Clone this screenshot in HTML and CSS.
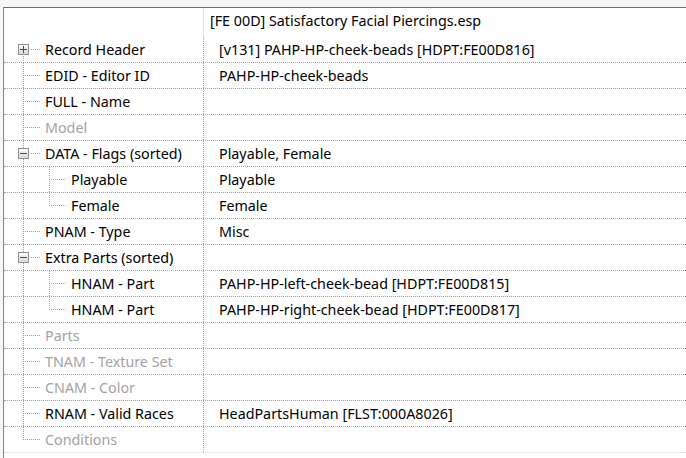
FILE: index.html
```html
<!DOCTYPE html>
<html>
<head>
<meta charset="utf-8">
<link rel="stylesheet" href="styles.css">
</head>
<body>
<div class="tree">
  <div class="head">
    <div class="hname"></div>
    <div class="hval">[FE 00D] Satisfactory Facial Piercings.esp</div>
  </div>

  <div class="row">
    <div class="name"><span class="g1 box-first"><span class="box plus"></span></span><span class="lbl">Record Header</span></div>
    <div class="val">[v131] PAHP-HP-cheek-beads [HDPT:FE00D816]</div>
  </div>
  <div class="row">
    <div class="name"><span class="g1 branch"></span><span class="lbl">EDID - Editor ID</span></div>
    <div class="val">PAHP-HP-cheek-beads</div>
  </div>
  <div class="row">
    <div class="name"><span class="g1 branch"></span><span class="lbl">FULL - Name</span></div>
    <div class="val"></div>
  </div>
  <div class="row">
    <div class="name"><span class="g1 branch"></span><span class="lbl dim">Model</span></div>
    <div class="val"></div>
  </div>
  <div class="row">
    <div class="name"><span class="g1 box-mid"><span class="box minus"></span></span><span class="lbl">DATA - Flags (sorted)</span></div>
    <div class="val">Playable, Female</div>
  </div>
  <div class="row">
    <div class="name"><span class="g1 pass"></span><span class="g2 branch2"></span><span class="lbl">Playable</span></div>
    <div class="val">Playable</div>
  </div>
  <div class="row">
    <div class="name"><span class="g1 pass"></span><span class="g2 last2"></span><span class="lbl">Female</span></div>
    <div class="val">Female</div>
  </div>
  <div class="row">
    <div class="name"><span class="g1 branch"></span><span class="lbl">PNAM - Type</span></div>
    <div class="val">Misc</div>
  </div>
  <div class="row">
    <div class="name"><span class="g1 box-mid"><span class="box minus"></span></span><span class="lbl">Extra Parts (sorted)</span></div>
    <div class="val"></div>
  </div>
  <div class="row">
    <div class="name"><span class="g1 pass"></span><span class="g2 branch2"></span><span class="lbl">HNAM - Part</span></div>
    <div class="val">PAHP-HP-left-cheek-bead [HDPT:FE00D815]</div>
  </div>
  <div class="row">
    <div class="name"><span class="g1 pass"></span><span class="g2 last2"></span><span class="lbl">HNAM - Part</span></div>
    <div class="val">PAHP-HP-right-cheek-bead [HDPT:FE00D817]</div>
  </div>
  <div class="row">
    <div class="name"><span class="g1 branch"></span><span class="lbl dim">Parts</span></div>
    <div class="val"></div>
  </div>
  <div class="row">
    <div class="name"><span class="g1 branch"></span><span class="lbl dim">TNAM - Texture Set</span></div>
    <div class="val"></div>
  </div>
  <div class="row">
    <div class="name"><span class="g1 branch"></span><span class="lbl dim">CNAM - Color</span></div>
    <div class="val"></div>
  </div>
  <div class="row">
    <div class="name"><span class="g1 branch"></span><span class="lbl">RNAM - Valid Races</span></div>
    <div class="val">HeadPartsHuman [FLST:000A8026]</div>
  </div>
  <div class="row row-last">
    <div class="name"><span class="g1 last"></span><span class="lbl dim">Conditions</span></div>
    <div class="val"></div>
  </div>
</div>
</body>
</html>
```

FILE: styles.css
```css
html, body {
  margin: 0;
  padding: 0;
  background: #f7f7f7;
  height: 100%;
  overflow: hidden;
}

.tree {
  margin: 7px 0 0 3px;
  border-top: 1px solid #6e6e6e;
  border-left: 1px solid #828282;
  background: #ffffff;
  height: calc(100% - 7px);
  font-family: "Noto Sans", "Open Sans", sans-serif;
  font-size: 14.3px;
  color: #000;
}

.head {
  display: flex;
  height: 29px;
}

.hname {
  width: 199px;
  flex: none;
  border-right: 1px solid #e3e3e3;
}

.hval {
  padding-left: 6px;
  line-height: 26px;
  white-space: nowrap;
}

.row {
  display: flex;
  height: 25px;
  border-bottom: 1px dotted #a0a0a0;
}

.row-last {
  border-bottom-color: #dadada;
}

.name {
  width: 199px;
  flex: none;
  display: flex;
  border-right: 1px dotted #a0a0a0;
}

.val {
  padding-left: 15px;
  line-height: 25px;
  white-space: nowrap;
}

.lbl {
  line-height: 25px;
  white-space: nowrap;
  padding-left: 1px;
}

.dim {
  color: #a3a3a3;
}

/* tree guide columns */
.g1 {
  box-sizing: border-box;
  width: 40px;
  flex: none;
  display: flex;
  align-items: center;
  background-repeat: no-repeat;
}

.g2 {
  width: 26px;
  flex: none;
  background-repeat: no-repeat;
}

.branch {
  background-image:
    repeating-linear-gradient(to bottom, #a0a0a0 0 1px, transparent 1px 2px),
    repeating-linear-gradient(to right, #a0a0a0 0 1px, transparent 1px 2px);
  background-size: 1px 26px, 16px 1px;
  background-position: 19px 0, 21px 12px;
}

.last {
  background-image:
    repeating-linear-gradient(to bottom, #a0a0a0 0 1px, transparent 1px 2px),
    repeating-linear-gradient(to right, #a0a0a0 0 1px, transparent 1px 2px);
  background-size: 1px 13px, 16px 1px;
  background-position: 19px 0, 21px 12px;
}

.pass {
  background-image:
    repeating-linear-gradient(to bottom, #a0a0a0 0 1px, transparent 1px 2px);
  background-size: 1px 26px;
  background-position: 19px 0;
}

.box-first {
  padding-left: 14px;
  background-image:
    repeating-linear-gradient(to bottom, #a0a0a0 0 1px, transparent 1px 2px),
    repeating-linear-gradient(to right, #a0a0a0 0 1px, transparent 1px 2px);
  background-size: 1px 9px, 10px 1px;
  background-position: 19px 17px, 27px 12px;
}

.box-mid {
  padding-left: 14px;
  background-image:
    repeating-linear-gradient(to bottom, #a0a0a0 0 1px, transparent 1px 2px),
    repeating-linear-gradient(to right, #a0a0a0 0 1px, transparent 1px 2px);
  background-size: 1px 26px, 10px 1px;
  background-position: 19px 0, 27px 12px;
}

.branch2 {
  background-image:
    repeating-linear-gradient(to bottom, #a0a0a0 0 1px, transparent 1px 2px),
    repeating-linear-gradient(to right, #a0a0a0 0 1px, transparent 1px 2px);
  background-size: 1px 26px, 16px 1px;
  background-position: 5px 0, 7px 12px;
}

.last2 {
  background-image:
    repeating-linear-gradient(to bottom, #a0a0a0 0 1px, transparent 1px 2px),
    repeating-linear-gradient(to right, #a0a0a0 0 1px, transparent 1px 2px);
  background-size: 1px 13px, 16px 1px;
  background-position: 5px 0, 7px 12px;
}

/* expand / collapse box */
.box {
  width: 9px;
  height: 9px;
  border: 1px solid #8f8f8f;
  background: linear-gradient(to bottom, #ffffff, #d8d8d8);
  display: grid;
  place-items: center;
}

.box::before {
  content: "";
  width: 7px;
  height: 1px;
  background: #2b4a96;
  grid-area: 1 / 1;
}

.plus::after {
  content: "";
  width: 1px;
  height: 7px;
  background: #2b4a96;
  grid-area: 1 / 1;
}
```
